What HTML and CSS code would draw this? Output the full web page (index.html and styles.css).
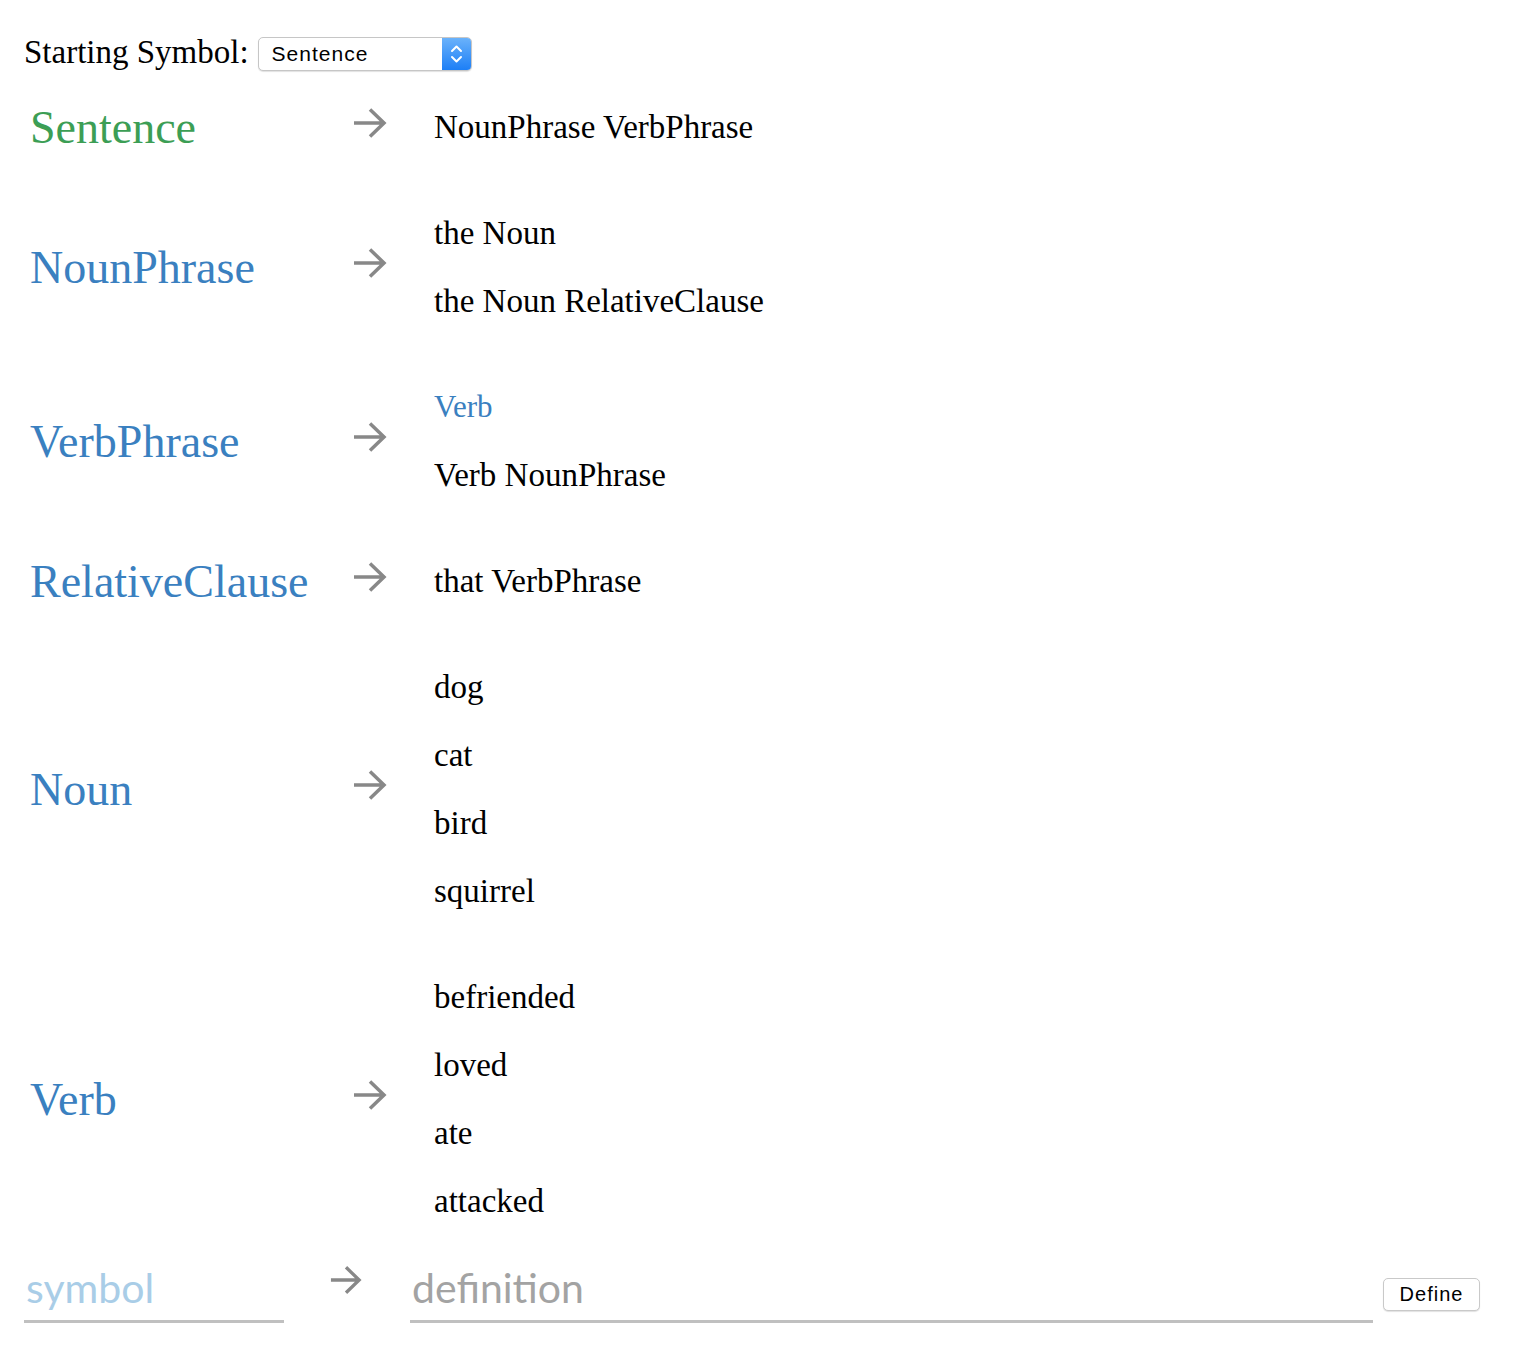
FILE: index.html
```html
<!DOCTYPE html>
<html>
<head>
<meta charset="utf-8">
<link rel="stylesheet" href="styles.css">
</head>
<body>
<div class="page">
  <div class="header">
    <span class="start-label">Starting Symbol:</span>
    <div class="select">
      <span class="select-text">Sentence</span>
      <span class="select-btn">
        <svg width="29" height="32" viewBox="0 0 29 32"><path d="M10 13 L14.5 8.5 L19 13 M10 19 L14.5 23.5 L19 19" fill="none" stroke="#fff" stroke-width="2" stroke-linecap="round" stroke-linejoin="round"/></svg>
      </span>
    </div>
  </div>

  <div class="rules">
    <div class="rule">
      <div class="sym start">Sentence</div>
      <div class="arrow"><svg width="34" height="30" viewBox="0 0 34 30"><path d="M1 15 H31 M17 1.5 L31 15 L17 28.5" fill="none" stroke="#888" stroke-width="3.5"/></svg></div>
      <div class="defs"><div class="def">NounPhrase VerbPhrase</div></div>
    </div>
    <div class="rule">
      <div class="sym">NounPhrase</div>
      <div class="arrow"><svg width="34" height="30" viewBox="0 0 34 30"><path d="M1 15 H31 M17 1.5 L31 15 L17 28.5" fill="none" stroke="#888" stroke-width="3.5"/></svg></div>
      <div class="defs"><div class="def">the Noun</div><div class="def">the Noun RelativeClause</div></div>
    </div>
    <div class="rule">
      <div class="sym">VerbPhrase</div>
      <div class="arrow"><svg width="34" height="30" viewBox="0 0 34 30"><path d="M1 15 H31 M17 1.5 L31 15 L17 28.5" fill="none" stroke="#888" stroke-width="3.5"/></svg></div>
      <div class="defs"><div class="def link">Verb</div><div class="def">Verb NounPhrase</div></div>
    </div>
    <div class="rule">
      <div class="sym">RelativeClause</div>
      <div class="arrow"><svg width="34" height="30" viewBox="0 0 34 30"><path d="M1 15 H31 M17 1.5 L31 15 L17 28.5" fill="none" stroke="#888" stroke-width="3.5"/></svg></div>
      <div class="defs"><div class="def">that VerbPhrase</div></div>
    </div>
    <div class="rule">
      <div class="sym">Noun</div>
      <div class="arrow"><svg width="34" height="30" viewBox="0 0 34 30"><path d="M1 15 H31 M17 1.5 L31 15 L17 28.5" fill="none" stroke="#888" stroke-width="3.5"/></svg></div>
      <div class="defs"><div class="def">dog</div><div class="def">cat</div><div class="def">bird</div><div class="def">squirrel</div></div>
    </div>
    <div class="rule">
      <div class="sym">Verb</div>
      <div class="arrow"><svg width="34" height="30" viewBox="0 0 34 30"><path d="M1 15 H31 M17 1.5 L31 15 L17 28.5" fill="none" stroke="#888" stroke-width="3.5"/></svg></div>
      <div class="defs"><div class="def">befriended</div><div class="def">loved</div><div class="def">ate</div><div class="def">attacked</div></div>
    </div>
  </div>

  <div class="new-rule">
    <input class="in-symbol" type="text" placeholder="symbol">
    <div class="arrow small"><svg width="34" height="30" viewBox="0 0 34 30"><path d="M1 15 H31 M17 1.5 L31 15 L17 28.5" fill="none" stroke="#888" stroke-width="3.5"/></svg></div>
    <input class="in-def" type="text" placeholder="definition">
    <button class="define">Define</button>
  </div>
</div>
</body>
</html>
```

FILE: styles.css
```css
html, body {
  margin: 0;
  padding: 0;
  background: #fff;
}

.page {
  padding: 0 36px 0 24px;
  font-family: "Liberation Serif", serif;
  color: #000;
}

.header {
  display: flex;
  align-items: center;
  padding-top: 37px;
  margin-bottom: 3px;
  height: 34px;
}

.start-label {
  font-size: 33px;
  margin-right: 9px;
  position: relative;
  top: -2px;
}

.select {
  display: flex;
  width: 214px;
  height: 34px;
  box-sizing: border-box;
  border: 1px solid #c6c6c6;
  border-radius: 5px;
  box-shadow: 0 1px 1px rgba(0,0,0,0.12);
  overflow: hidden;
  background: #fff;
}

.select-text {
  flex: 1;
  font-family: "Liberation Sans", sans-serif;
  font-size: 21px;
  letter-spacing: 1px;
  line-height: 32px;
  padding-left: 13px;
}

.select-btn {
  width: 29px;
  display: flex;
  align-items: center;
  justify-content: center;
  background: linear-gradient(#6ab2fb, #1d7ff6);
}

.rules {
  padding-left: 6px;
}

.rule {
  display: flex;
  align-items: center;
  padding: 19px 0;
}

.sym {
  width: 323px;
  font-size: 46px;
  color: #3a80c0;
}

.sym.start {
  color: #3c9e55;
}

.arrow {
  width: 81px;
  height: 30px;
  margin-bottom: 9px;
}

.arrow svg {
  display: block;
}

.defs {
  display: flex;
  flex-direction: column;
}

.def {
  font-size: 33px;
  line-height: 68px;
  height: 68px;
}

.def.link {
  color: #3a80c0;
  font-size: 31px;
}

.new-rule {
  display: flex;
  align-items: flex-start;
}

.new-rule input {
  display: block;
  height: 69px;
  box-sizing: border-box;
  border: none;
  border-bottom: 3px solid #c0c0c0;
  outline: none;
  padding: 0 2px;
  font-family: Lato, sans-serif;
  font-size: 41px;
  background: transparent;
}

.in-symbol {
  width: 260px;
  color: #3a80c0;
}

.in-symbol::placeholder {
  color: #a9cde7;
}

.in-def {
  width: 963px;
  color: #000;
}

.in-def::placeholder {
  color: #a3a3a3;
}

.arrow.small {
  width: 32px;
  margin: 11px 48px 0 46px;
}

.arrow.small svg {
  width: 32px;
  height: 30px;
}

.define {
  margin: 24px 0 0 10px;
  width: 97px;
  height: 33px;
  border: 1px solid #c9c9c9;
  border-radius: 5px;
  background: #fff;
  box-shadow: 0 1px 1px rgba(0,0,0,0.12);
  font-family: "Liberation Sans", sans-serif;
  font-size: 20px;
  letter-spacing: 1px;
  color: #000;
  padding: 0;
}
```
